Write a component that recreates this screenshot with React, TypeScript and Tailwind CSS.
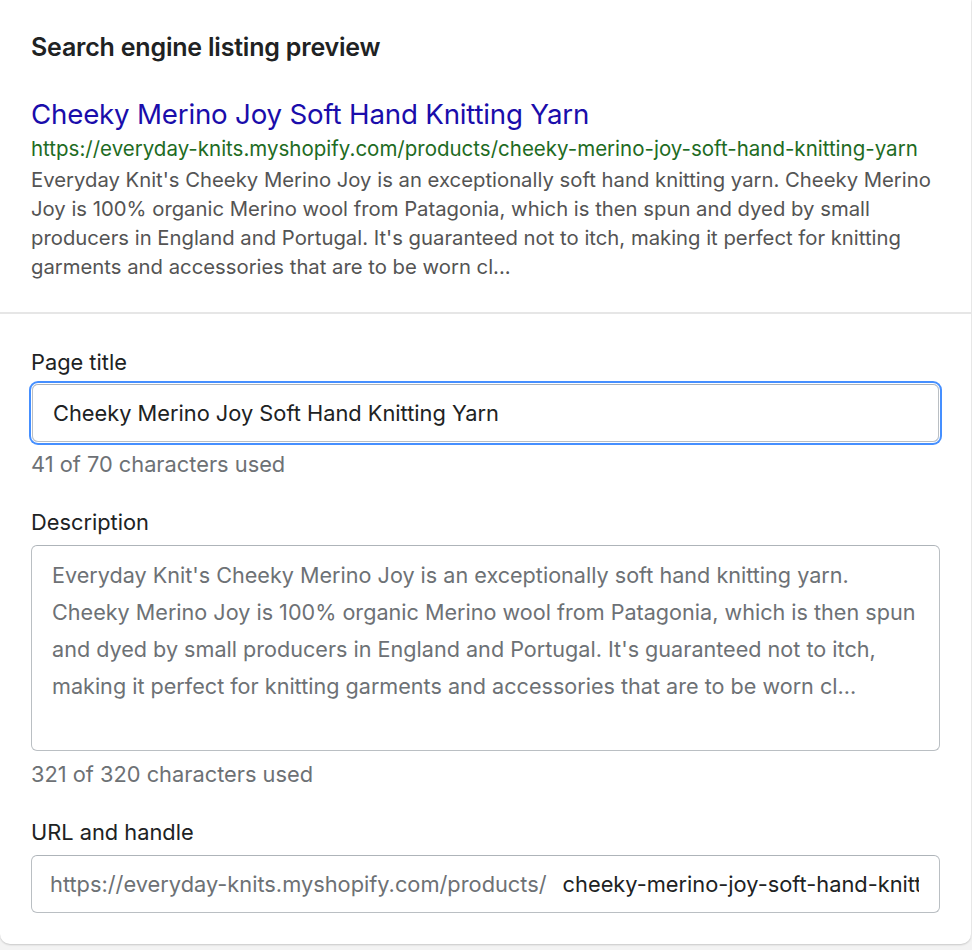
import React from "react";

export default function App() {
  const font = { fontFamily: "Inter, 'Noto Sans', sans-serif" };
  return (
    <div className="min-h-[950px] w-[972px] bg-[#f3f3f3] overflow-hidden" style={font}>
      <div className="w-[971px] bg-white rounded-b-[10px] shadow-[0_1px_2px_rgba(0,0,0,0.18)]">
        <div className="pl-[31px] pr-[31px] pt-[31px] pb-[31px]">
          <h2 className="text-[25px] leading-[32px] font-semibold text-[#202223] tracking-[-0.2px]">
            Search engine listing preview
          </h2>
          <div className="mt-[34px] text-[27.7px] leading-[34px] text-[#1a0dab] tracking-[-0.2px]">
            Cheeky Merino Joy Soft Hand Knitting Yarn
          </div>
          <div className="mt-[5px] text-[20.5px] leading-[26px] text-[#1e6b23] whitespace-nowrap">
            https://everyday-knits.myshopify.com/products/cheeky-merino-joy-soft-hand-knitting-yarn
          </div>
          <div className="mt-[3px] text-[20.3px] leading-[29px] text-[#545454]">
            Everyday Knit's Cheeky Merino Joy is an exceptionally soft hand knitting yarn. Cheeky Merino Joy is 100% organic Merino wool from Patagonia, which is then spun and dyed by small producers in England and Portugal. It's guaranteed not to itch, making it perfect for knitting garments and accessories that are to be worn cl...
          </div>
        </div>
        <div className="h-[2px] bg-[#e6e6e6]" />
        <div className="pl-[31px] pr-[31px] pt-[34px] pb-[31px] text-[21.8px]">
          <div className="leading-[28px] text-[#202223]">Page title</div>
          <div className="mt-[8px] h-[58px] mx-[1px] rounded-[6px] border border-[#babfc3] border-t-[#aeb4b9] ring-2 ring-[#458fff] ring-offset-1 flex items-center pl-[20px] text-[#202223]">
            Cheeky Merino Joy Soft Hand Knitting Yarn
          </div>
          <div className="mt-[8px] leading-[28px] text-[#6d7175]">41 of 70 characters used</div>
          <div className="mt-[30px] leading-[28px] text-[#202223]">Description</div>
          <div className="mt-[9px] h-[206px] rounded-[6px] border border-[#babfc3] border-t-[#aeb4b9] pl-[20px] pr-[12px] pt-[11px] text-[21.6px] leading-[37px] text-[#6d7175]">
            Everyday Knit's Cheeky Merino Joy is an exceptionally soft hand knitting yarn. Cheeky Merino Joy is 100% organic Merino wool from Patagonia, which is then spun and dyed by small producers in England and Portugal. It's guaranteed not to itch, making it perfect for knitting garments and accessories that are to be worn cl...
          </div>
          <div className="mt-[9px] leading-[28px] text-[#6d7175]">321 of 320 characters used</div>
          <div className="mt-[30px] leading-[28px] text-[#202223]">URL and handle</div>
          <div className="mt-[9px] h-[58px] rounded-[6px] border border-[#babfc3] border-t-[#aeb4b9] flex items-center pl-[18px] pr-[20px] overflow-hidden whitespace-nowrap">
            <span className="text-[#6d7175] shrink-0">https://everyday-knits.myshopify.com/products/</span>
            <span className="ml-[16px] text-[#202223] overflow-hidden">cheeky-merino-joy-soft-hand-knitting-yarn</span>
          </div>
        </div>
      </div>
    </div>
  );
}
